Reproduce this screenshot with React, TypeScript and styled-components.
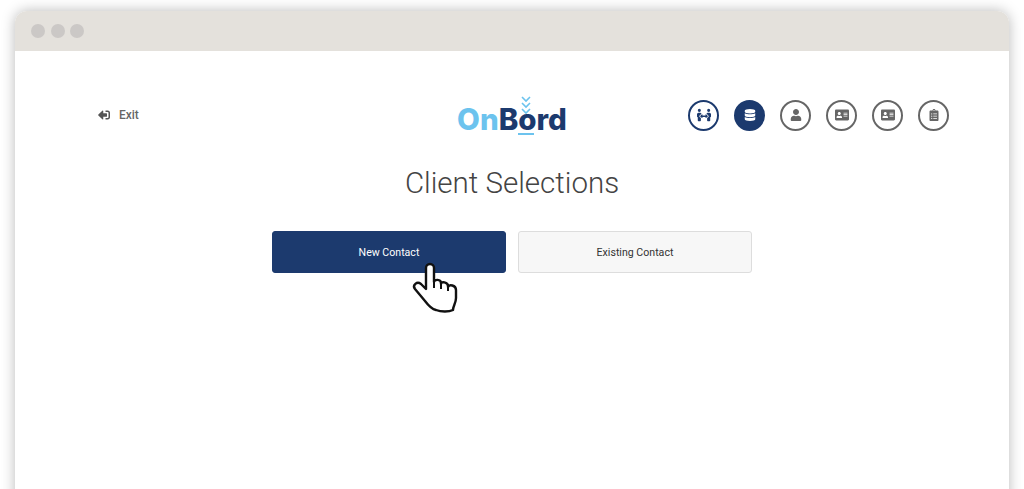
import { createGlobalStyle, styled } from "styled-components";
import {
  FaAddressCard,
  FaClipboardList,
  FaDatabase,
  FaPeopleArrows,
  FaSignOutAlt,
  FaUser,
} from "react-icons/fa";
import type { ReactNode } from "react";

const GlobalStyle = createGlobalStyle`
  html, body {
    margin: 0;
    height: 489px;
    overflow: hidden;
    background: #ffffff;
    font-family: Roboto, "Liberation Sans", sans-serif;
  }
`;

const Page = styled.div`
  height: 489px;
  padding: 11px 15px 0;
  box-sizing: border-box;
  overflow: hidden;
`;

const BrowserWindow = styled.div`
  height: 520px;
  background: #ffffff;
  border-radius: 12px 12px 0 0;
  box-shadow: 0 0 14px rgba(0, 0, 0, 0.28);
  overflow: hidden;
`;

const TitleBar = styled.div`
  height: 40px;
  padding-left: 16px;
  display: flex;
  align-items: center;
  gap: 5.5px;
  background: #e4e1dc;
`;

const Dot = styled.span`
  width: 14px;
  height: 14px;
  border-radius: 50%;
  background: #cbc8c6;
`;

const Header = styled.header`
  display: grid;
  grid-template-columns: 1fr auto 1fr;
  align-items: center;
  height: 90px;
  padding: 0 60px;
  margin-top: 20px;
`;

const ExitLink = styled.a`
  display: flex;
  align-items: center;
  gap: 9px;
  padding-left: 23px;
  font-size: 12px;
  font-weight: 500;
  color: #666666;
  margin-top: -2px;
`;

const ExitIcon = styled(FaSignOutAlt)`
  font-size: 12px;
  color: #555555;
  transform: scaleX(-1);
`;

const Logo = styled.div`
  position: relative;
  font-family: Inter, sans-serif;
  font-weight: 800;
  font-size: 29.5px;
  line-height: 40px;
  color: #1c3a6e;
  margin-top: 6px;
`;

const LogoAccent = styled.span`
  color: #6cc3ee;
`;

const LogoMark = styled.svg`
  position: absolute;
  left: 61px;
  top: -3px;
`;

const Steps = styled.nav`
  display: flex;
  justify-content: flex-end;
  gap: 15px;
  margin-top: -2px;
`;

const Step = styled.div<{ $tone: "active" | "current" | "idle" }>`
  width: 31px;
  height: 31px;
  box-sizing: border-box;
  border-radius: 50%;
  display: flex;
  align-items: center;
  justify-content: center;
  border: 2.5px solid ${(p) => (p.$tone === "idle" ? "#666666" : "#1c3a6e")};
  background: ${(p) => (p.$tone === "current" ? "#1c3a6e" : "transparent")};
  color: ${(p) =>
    p.$tone === "current" ? "#ffffff" : p.$tone === "active" ? "#1c3a6e" : "#666666"};
  font-size: 14px;
`;

const Title = styled.h1`
  margin: 2px 0 0;
  text-align: center;
  font-size: 29.5px;
  line-height: 40px;
  font-weight: 300;
  color: #444444;
`;

const Actions = styled.div`
  display: flex;
  justify-content: center;
  gap: 12px;
  margin-top: 28px;
`;

const ActionWrap = styled.div`
  position: relative;
`;

const ActionButton = styled.button<{ $primary?: boolean }>`
  width: 234px;
  height: 42px;
  border-radius: 3px;
  border: 1px solid ${(p) => (p.$primary ? "#1c3a6e" : "#dddddd")};
  background: ${(p) => (p.$primary ? "#1c3a6e" : "#f7f7f7")};
  color: ${(p) => (p.$primary ? "#ffffff" : "#333333")};
  font-family: Roboto, sans-serif;
  font-size: 10.6px;
  font-weight: 400;
`;

const Pointer = styled.svg`
  position: absolute;
  left: 128px;
  top: 24px;
`;

function HandCursor() {
  return (
    <Pointer width="70" height="65" viewBox="0 0 70 65" aria-hidden="true">
      <path
        d="M26 13a4 4 0 0 1 8 0V27c0-3 7-3 7 1v1c0-3 7-2 7 2v1c1-3 8-2 8 3v8c0 5-3 8-3 12-4 2-12 2-17 0-5-1-8-5-11-9L15 34c-3-4 2-8 6-5l5 5Z"
        fill="#ffffff"
        stroke="#111111"
        strokeWidth="2.4"
        strokeLinejoin="round"
      />
      <path d="M34 27v6M41 29v5M48 32v4" fill="none" stroke="#111111" strokeWidth="2" />
    </Pointer>
  );
}

const stepIcons: { tone: "active" | "current" | "idle"; icon: ReactNode }[] = [
  { tone: "active", icon: <FaPeopleArrows /> },
  { tone: "current", icon: <FaDatabase size={12} /> },
  { tone: "idle", icon: <FaUser size={12} /> },
  { tone: "idle", icon: <FaAddressCard /> },
  { tone: "idle", icon: <FaAddressCard /> },
  { tone: "idle", icon: <FaClipboardList size={12} /> },
];

export default function App() {
  return (
    <Page>
      <GlobalStyle />
      <BrowserWindow>
        <TitleBar>
          <Dot />
          <Dot />
          <Dot />
        </TitleBar>
        <Header>
          <ExitLink>
            <ExitIcon />
            Exit
          </ExitLink>
          <Logo>
            <LogoAccent>On</LogoAccent>Bord
            <LogoMark width="16" height="40" viewBox="0 0 16 40" aria-hidden="true">
              <path
                d="M4 1l4 4 4-4M4 7l4 4 4-4M4 13l4 4 4-4"
                fill="none"
                stroke="#6cc3ee"
                strokeWidth="1.6"
              />
              <rect x="0" y="37" width="16" height="2" fill="#6cc3ee" />
            </LogoMark>
          </Logo>
          <Steps>
            {stepIcons.map((step, i) => (
              <Step key={i} $tone={step.tone}>
                {step.icon}
              </Step>
            ))}
          </Steps>
        </Header>
        <Title>Client Selections</Title>
        <Actions>
          <ActionWrap>
            <ActionButton $primary>New Contact</ActionButton>
            <HandCursor />
          </ActionWrap>
          <ActionButton>Existing Contact</ActionButton>
        </Actions>
      </BrowserWindow>
    </Page>
  );
}
